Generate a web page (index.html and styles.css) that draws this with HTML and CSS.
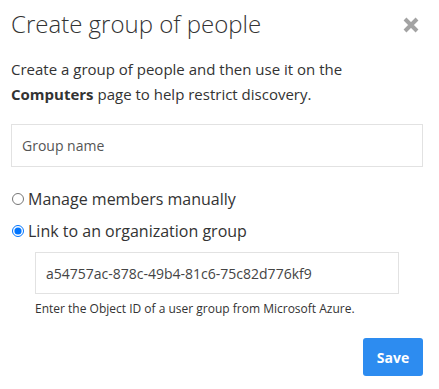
FILE: index.html
```html
<!DOCTYPE html>
<html lang="en">

<head>
    <meta charset="UTF-8">
    <meta name="viewport" content="width=device-width, initial-scale=1.0">
    <title>Create group of people</title>
    <link rel="stylesheet" href="styles.css">
</head>

<body>
    <div class="dialog">
        <div class="head">
            <h2 class="title">Create group of people</h2>
            <svg class="close" width="16" height="16" viewBox="0 0 16 16">
                <path d="M2 2 L14 14 M14 2 L2 14" stroke="#a3a3a3" stroke-width="4" />
            </svg>
        </div>
        <p class="intro">Create a group of people and then use it on the <b>Computers</b> page to help restrict discovery.</p>
        <input class="field" type="text" placeholder="Group name">
        <label class="choice"><input type="radio" name="mode"> Manage members manually</label>
        <label class="choice"><input type="radio" name="mode" checked> Link to an organization group</label>
        <div class="linkWrap">
            <input class="field small" type="text" value="a54757ac-878c-49b4-81c6-75c82d776kf9">
            <div class="hint">Enter the Object ID of a user group from Microsoft Azure.</div>
        </div>
        <div class="foot">
            <button class="save">Save</button>
        </div>
    </div>
</body>

</html>
```

FILE: styles.css
```css
body {
    margin: 0;
    background: white;
    font-family: "Open Sans", "Liberation Sans", sans-serif;
    color: #333;
}
.dialog {
    padding: 8px 16px 0 11px;
}
.head {
    display: flex;
    justify-content: space-between;
    align-items: center;
}
.title {
    margin: 0;
    font-size: 24px;
    font-weight: 300;
    line-height: 32px;
}
.close {
    margin: 2px 4px 0 0;
}
.intro {
    margin: 17px 0 17px;
    font-size: 15px;
    line-height: 25px;
}
.field {
    display: block;
    box-sizing: border-box;
    width: 412px;
    height: 43px;
    border: 1px solid #e2e2e2;
    padding: 0 10px;
    font-family: inherit;
    font-size: 14px;
    color: #444;
    margin-bottom: 21px;
}
.field::placeholder {
    color: #555;
}
.choice {
    display: flex;
    align-items: center;
    font-size: 16px;
    line-height: 22px;
    margin-bottom: 10px;
    color: #333;
}
.choice input {
    margin: 0 4px 0 1px;
    width: 12px;
    height: 12px;
}
.linkWrap {
    padding-left: 24px;
}
.field.small {
    width: 364px;
    height: 42px;
    font-size: 14px;
    margin-bottom: 6px;
}
.hint {
    font-size: 12px;
    color: #333;
}
.foot {
    display: flex;
    justify-content: flex-end;
    margin-top: 21px;
}
.save {
    width: 60px;
    height: 38px;
    border: 0;
    border-radius: 3px;
    background: #2d8cf0;
    color: white;
    font-family: inherit;
    font-weight: 700;
    font-size: 14px;
}
```
